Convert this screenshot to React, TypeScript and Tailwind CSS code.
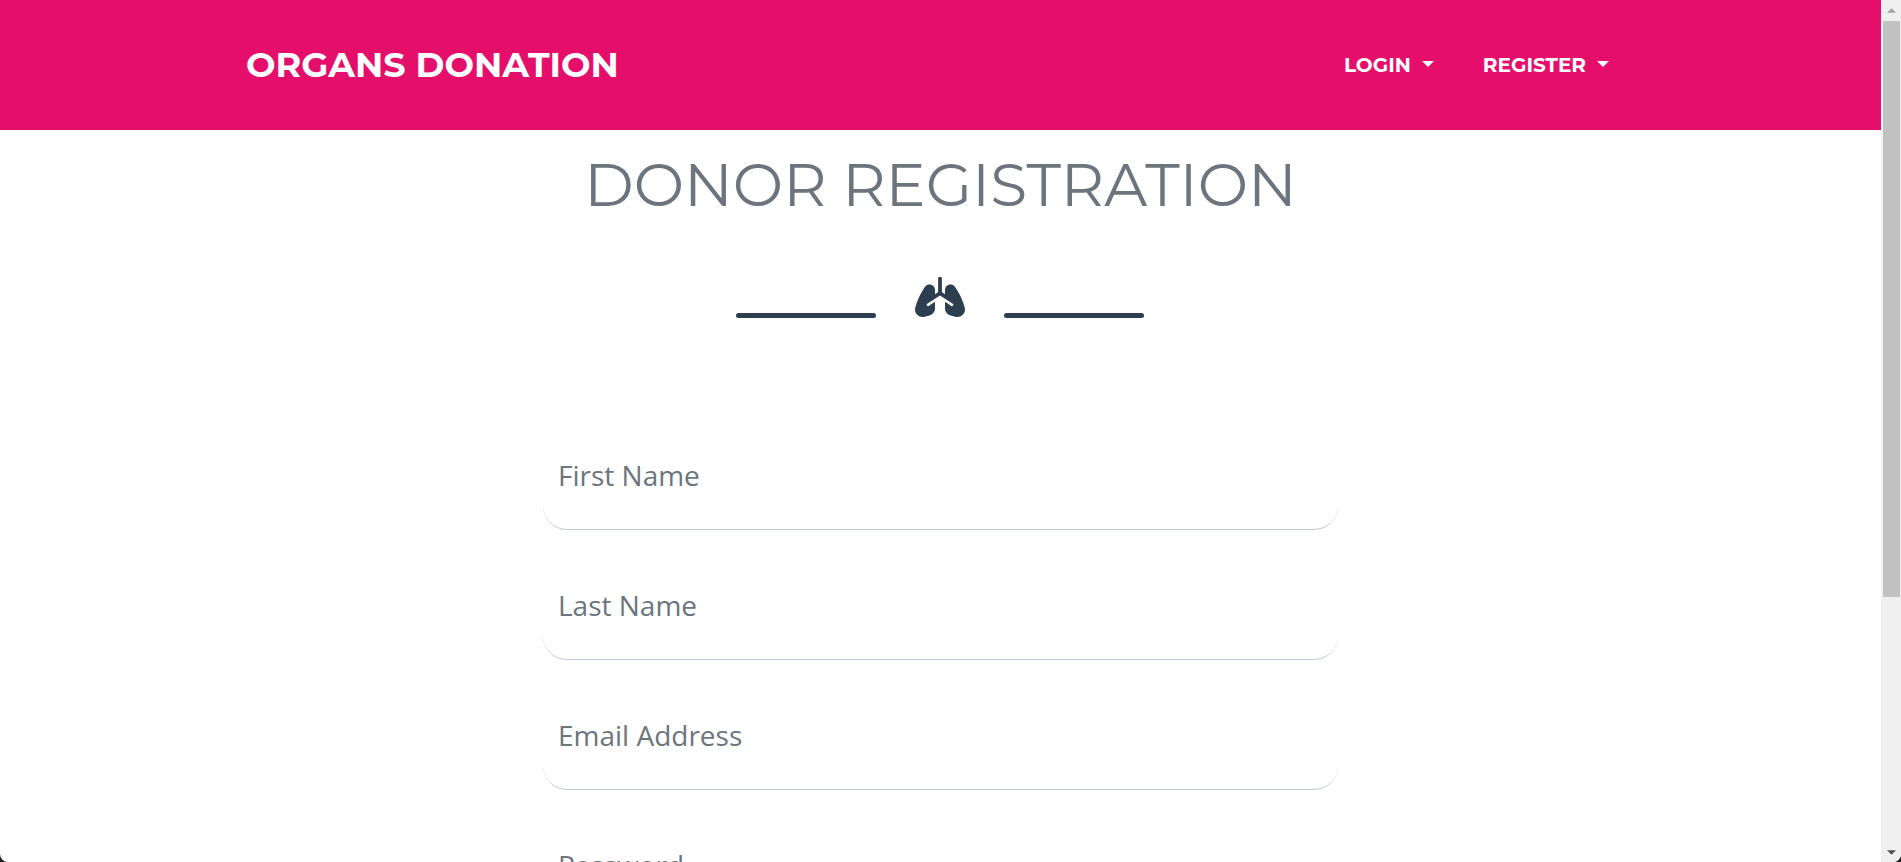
import { FaLungs } from "react-icons/fa";

const fields = [
  { name: "firstName", label: "First Name", type: "text" },
  { name: "lastName", label: "Last Name", type: "text" },
  { name: "email", label: "Email Address", type: "email" },
  { name: "password", label: "Password", type: "password" },
];

function Caret({ className = "" }: { className?: string }) {
  return (
    <svg viewBox="0 0 12 6" className={className} fill="currentColor" aria-hidden="true">
      <path d="M0 0h12L6 6z" />
    </svg>
  );
}

function MenuButton({ label }: { label: string }) {
  return (
    <button type="button" className="flex items-center gap-[11px] text-xl font-bold text-white" aria-haspopup="menu">
      {label}
      <Caret className="mb-0.5 h-1.5 w-3" />
    </button>
  );
}

function Header() {
  return (
    <header className="bg-[#e60e6b] font-[Montserrat,Inter,sans-serif]">
      <div className="mx-auto flex h-[130px] max-w-[1389px] items-center justify-between">
        <a href="#" className="text-[35px] font-bold text-white">
          ORGANS DONATION
        </a>
        <nav className="flex gap-[49px] pr-[26px]">
          <MenuButton label="LOGIN" />
          <MenuButton label="REGISTER" />
        </nav>
      </div>
    </header>
  );
}

function Divider() {
  return (
    <div className="mt-14 flex items-end justify-center gap-[39px] pr-px text-[#2c3e50]">
      <span className="h-[5px] w-[140px] rounded-full bg-current" />
      <FaLungs className="mb-px h-10 w-[50px]" />
      <span className="h-[5px] w-[140px] rounded-full bg-current" />
    </div>
  );
}

function ScrollRail() {
  return (
    <div className="flex h-full w-5 shrink-0 flex-col items-center bg-[#f0f0f0]" aria-hidden="true">
      <div className="flex h-[21px] items-center">
        <Caret className="h-[5px] w-[9px] rotate-180 text-[#a3a3a3]" />
      </div>
      <div className="ml-px h-[576px] w-[17px] bg-[#c1c1c1]" />
      <div className="mt-auto flex h-5 items-center">
        <Caret className="h-[5px] w-[9px] text-[#505050]" />
      </div>
    </div>
  );
}

export default function App() {
  return (
    <div className="h-screen bg-[#202020]">
      <div className="flex h-full overflow-hidden rounded-b-lg bg-white">
        <div className="min-w-0 flex-1 overflow-y-auto [scrollbar-width:none]">
          <Header />
          <main className="mx-auto max-w-[795px] pt-[19px] pb-24">
            <h1 className="text-center font-[Montserrat,Inter,sans-serif] text-6xl leading-[72px] font-normal whitespace-nowrap text-[#6c757d]">
              DONOR REGISTRATION
            </h1>
            <Divider />
            <form className="mt-[82px] flex flex-col">
              {fields.map((field) => (
                <input
                  key={field.name}
                  name={field.name}
                  type={field.type}
                  placeholder={field.label}
                  aria-label={field.label}
                  className="h-[130px] w-full rounded-3xl border-b border-[#c3c9d0] px-[15px] pt-5 font-['Open_Sans','Noto_Sans',sans-serif] text-[28px] text-[#212529] outline-none placeholder:text-[#6c757d] placeholder:opacity-100"
                />
              ))}
            </form>
          </main>
        </div>
        <ScrollRail />
      </div>
    </div>
  );
}
